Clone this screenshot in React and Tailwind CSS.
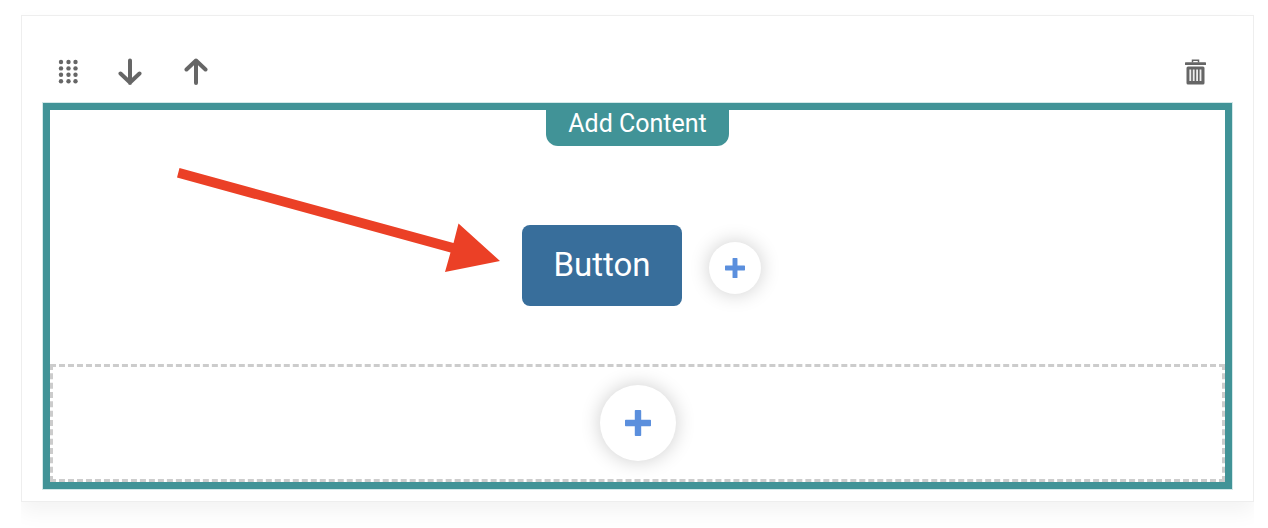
function DragIcon() {
  return (
    <svg width="22" height="28" viewBox="0 0 22 28" fill="#666" aria-hidden="true">
      {[4, 11.5, 18.5].map((x) =>
        [5, 11.4, 17.8, 24.3].map((y) => <circle key={`${x}-${y}`} cx={x} cy={y} r="2.2" />)
      )}
    </svg>
  )
}

function ArrowDownIcon() {
  return (
    <svg width="24" height="28" viewBox="0 0 24 28" fill="none" stroke="#666" strokeWidth="4"
      strokeLinecap="round" strokeLinejoin="round" aria-hidden="true">
      <path d="M12 3.500V26M2.500 16.500l9.500 9 9.500-9" />
    </svg>
  )
}

function ArrowUpIcon() {
  return (
    <svg width="24" height="28" viewBox="0 0 24 28" fill="none" stroke="#666" strokeWidth="4"
      strokeLinecap="round" strokeLinejoin="round" aria-hidden="true">
      <path d="M12 26V3.500M2.500 12.500l9.500-9 9.500 9" />
    </svg>
  )
}

function TrashIcon() {
  return (
    <svg width="21" height="28" viewBox="0 0 21 28" aria-hidden="true">
      <path d="M7.500 5.500V3.200h6V5.500" fill="none" stroke="#666" strokeWidth="1.500" />
      <rect x="0" y="5.200" width="21" height="2.800" rx="0.600" fill="#666" />
      <rect x="1.500" y="9.500" width="18" height="18" rx="1.500" fill="#666" />
      <path d="M5.300 12.500v11.500M8.700 12.500v11.500M12.100 12.500v11.500M15.500 12.500v11.500" stroke="#eee" strokeWidth="1.800" />
    </svg>
  )
}

function PlusIcon({ size }) {
  return (
    <svg width={size} height={size} viewBox="0 0 26 26" fill="#5b8fdd" aria-hidden="true">
      <path d="M10.600 0h4.800q.8 0 .8.800v9h9q.8 0 .8.800v4.800q0 .8-.8.800h-9v9q0 .8-.8.800h-4.800q-.8 0-.8-.8v-9h-9q-.8 0-.8-.8v-4.800q0-.8.8-.8h9v-9q0-.8.8-.8z" />
    </svg>
  )
}

function Pointer() {
  return (
    <svg className="absolute right-full top-[-57px] mr-[22px] max-w-none" width="323" height="104"
      viewBox="0 0 323 104" fill="#eb4026" aria-hidden="true">
      <path d="M2.500 0 276.500 75l5-19.500L323 93l-55 11 5.500-19.500L0 9.500z" />
    </svg>
  )
}

export default function App() {
  return (
    <div className="overflow-hidden bg-white pb-[26px] pt-[15px] ml-[21px] mr-[14px] font-[Roboto,sans-serif]">
      <section className="border border-[#eee] px-5 pb-[11px] shadow-[0_10px_20px_0_rgba(0,0,0,0.05)]">
        {/* Block toolbar */}
        <div className="flex items-center justify-between pb-[17px] pl-[15px] pr-[27px] pt-[41px]">
          <div className="flex items-center gap-[42px]">
            <button type="button" aria-label="Drag block" className="-mr-[3px]"><DragIcon /></button>
            <button type="button" aria-label="Move down"><ArrowDownIcon /></button>
            <button type="button" aria-label="Move up"><ArrowUpIcon /></button>
          </div>
          <button type="button" aria-label="Delete block"><TrashIcon /></button>
        </div>

        {/* Selected block */}
        <div className="border border-[#d3e8e9]">
          <div className="flex flex-col border-7 border-[#419397]">
            <button type="button" className="h-9 self-center rounded-b-xl bg-[#419397] px-[22px] pb-2 text-[25px] leading-7 text-white">
              Add Content
            </button>
            <div className="flex items-center justify-center gap-[27px] pb-[58px] pl-2 pt-[79px]">
              <div className="relative">
                <button type="button" className="h-[81px] w-40 rounded-lg bg-[#386e9b] pb-0.5 text-[33px] text-white">
                  Button
                </button>
                <Pointer />
              </div>
              <button type="button" aria-label="Add element"
                className="mt-1 flex size-[52px] items-center justify-center rounded-full bg-white shadow-[0_0_20px_rgba(0,0,0,0.2)]">
                <PlusIcon size={20} />
              </button>
            </div>
            <div className="flex justify-center border-3 border-dashed border-[#ccc] py-[18px]">
              <button type="button" aria-label="Add row"
                className="flex size-[76px] items-center justify-center rounded-full bg-white shadow-[0_0_20px_rgba(0,0,0,0.2)]">
                <PlusIcon size={26} />
              </button>
            </div>
          </div>
        </div>
      </section>
    </div>
  )
}
